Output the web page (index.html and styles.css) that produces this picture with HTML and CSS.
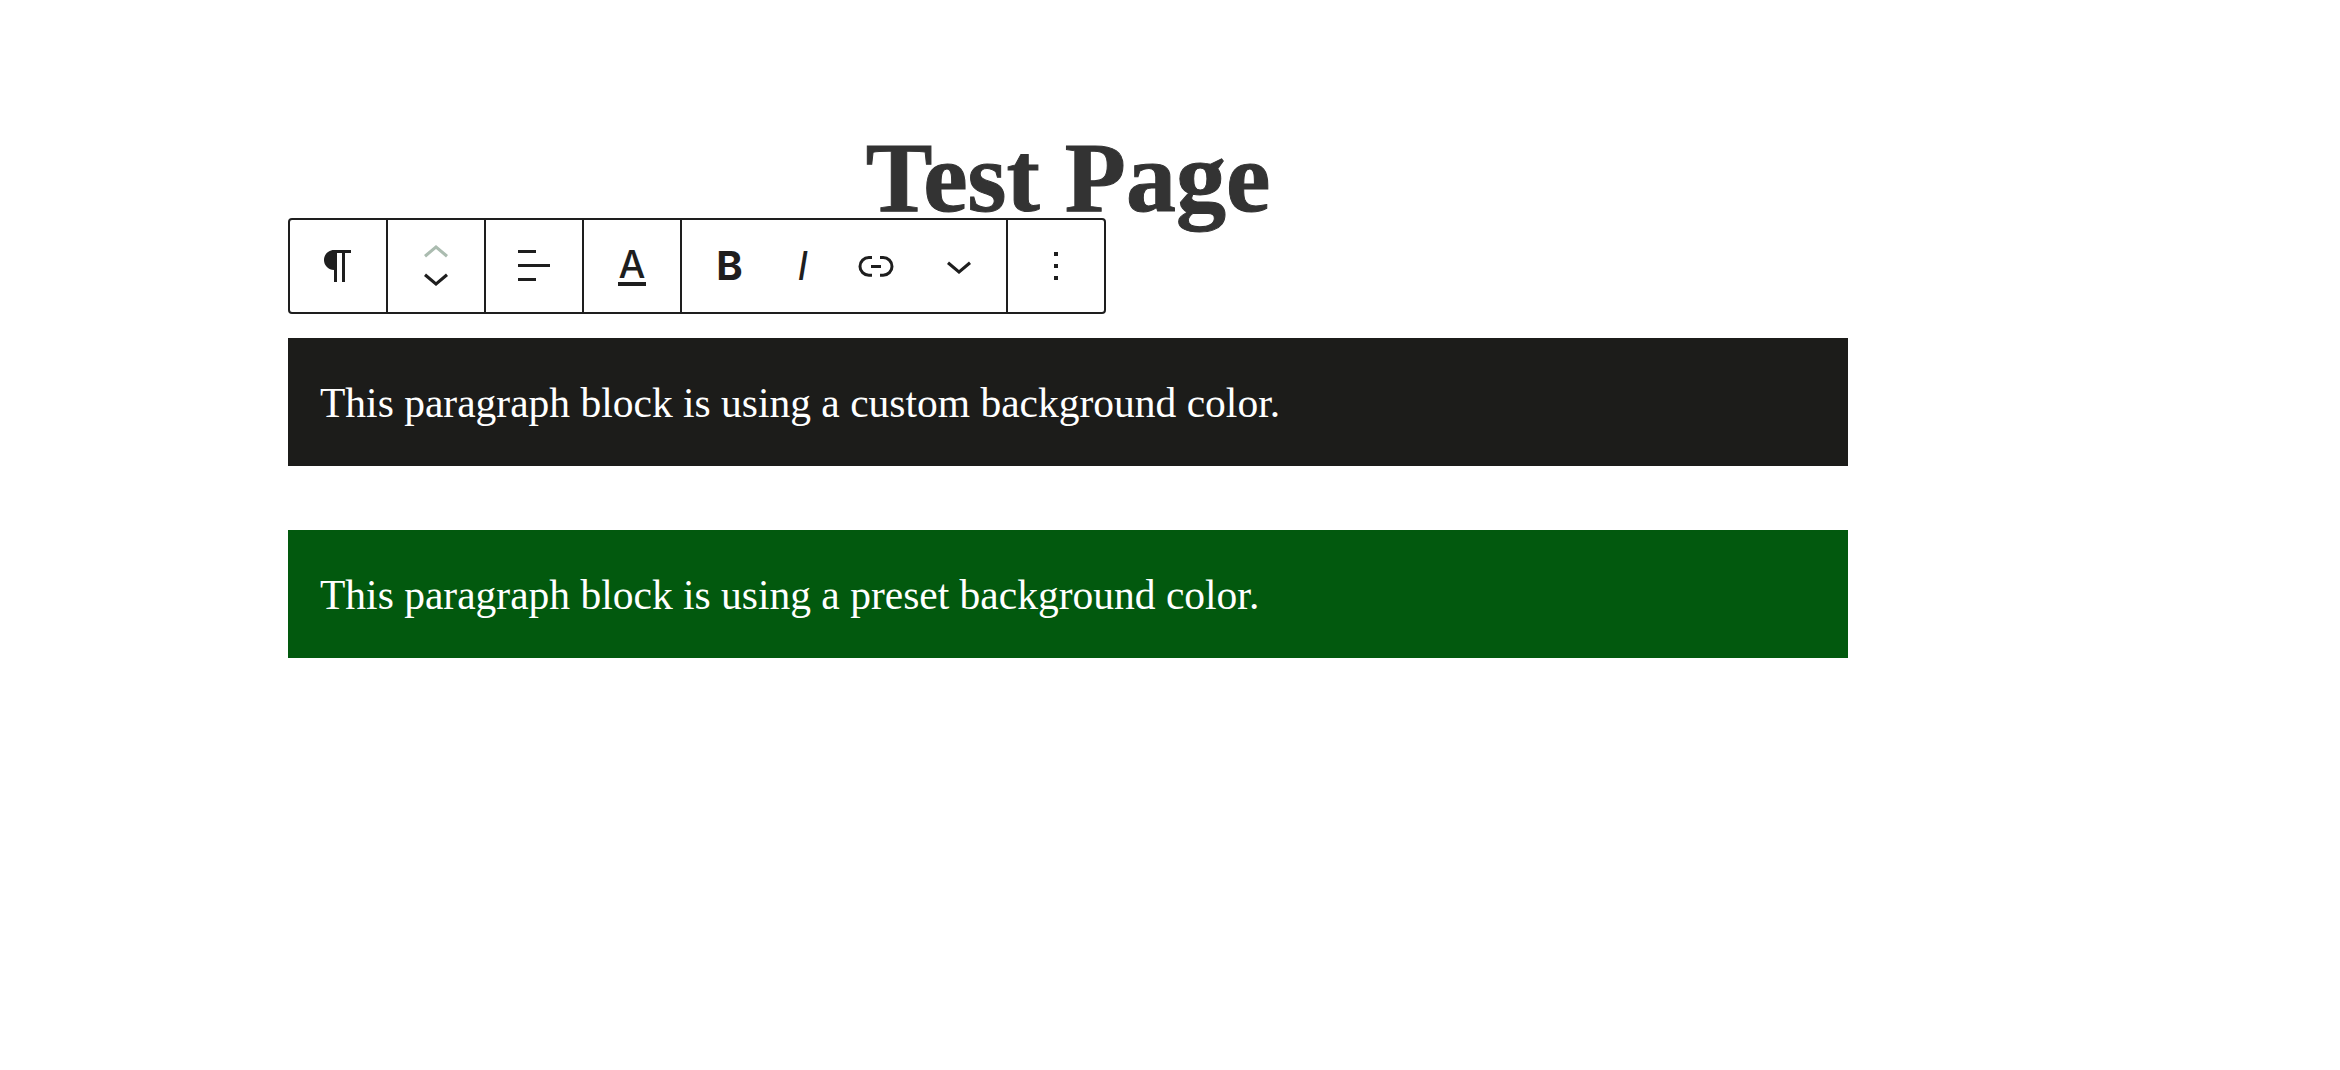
FILE: index.html
```html
<!DOCTYPE html>
<html lang="en">
<head>
<meta charset="utf-8">
<title>Test Page</title>
<link rel="stylesheet" href="styles.css">
</head>
<body>
<main class="page">
  <h1 class="title">Test Page</h1>
  <div class="toolbar">
    <div class="cell">
      <svg class="icon" viewBox="0 0 24 24"><path d="m9.99609 14v-.2251l.00391.0001v6.225h1.5v-14.5h2.5v14.5h1.5v-14.5h3v-1.5h-8.50391c-2.76142 0-5 2.23858-5 5 0 2.7614 2.23858 5 5 5z"/></svg>
    </div>
    <div class="cell">
      <svg class="mover" viewBox="0 0 24 32"><path class="disabled" d="M18 10.5 12 5.5 6 10.5 7 11.7l5-4.2 5 4.2z"/><path d="M18 21 12 26 6 21l1-1.2 5 4.2 5-4.2z"/></svg>
    </div>
    <div class="cell">
      <svg class="icon" viewBox="0 0 24 24"><path d="M13 5.5H4V4h9v1.5Zm7 7H4V11h16v1.5Zm-7 7H4V18h9v1.5Z"/></svg>
    </div>
    <div class="cell">
      <span class="color-a">A</span>
    </div>
    <div class="cell format">
      <span class="btn glyph-b">B</span>
      <span class="btn glyph-i">I</span>
      <span class="btn"><svg class="icon" viewBox="0 0 24 24"><path d="M10 17.389H8.444A5.194 5.194 0 1 1 8.444 7H10v1.5H8.444a3.694 3.694 0 0 0 0 7.389H10v1.5ZM14 7h1.556a5.194 5.194 0 0 1 0 10.39H14v-1.5h1.556a3.694 3.694 0 0 0 0-7.39H14V7Zm-4.5 6h5v-1.5h-5V13Z"/></svg></span>
      <span class="btn more"><svg class="icon" viewBox="0 0 24 24"><path d="M18 11 12 16 6 11l1-1.2 5 4.2 5-4.2z"/></svg></span>
    </div>
    <div class="cell">
      <svg class="icon" viewBox="0 0 24 24"><path d="M13 19h-2v-2h2v2zm0-6h-2v-2h2v2zm0-6h-2V5h2v2z"/></svg>
    </div>
  </div>
  <p class="para para-custom">This paragraph block is using a custom background color.</p>
  <p class="para para-preset">This paragraph block is using a preset background color.</p>
</main>
</body>
</html>
```
FILE: styles.css
```css
* { box-sizing: border-box; }
html, body { margin: 0; background: #fff; }
.page { width: 1848px; padding: 120px 0 0 288px; font-family: "Liberation Serif", serif; }
.title {
  margin: 0;
  height: 98px;
  line-height: 116px;
  font-size: 100px;
  font-weight: 700;
  text-align: center;
  color: #333;
  -webkit-text-stroke: 1px #333;
}
.toolbar {
  display: flex;
  width: 818px;
  height: 96px;
  border: 2px solid #1e1e1e;
  border-radius: 4px;
  background: #fff;
  position: relative;
}
.cell {
  flex: 0 0 98px;
  display: flex;
  align-items: center;
  justify-content: center;
  border-right: 2px solid #1e1e1e;
}
.cell:last-child { border-right: 0; flex-basis: 96px; }
.format { flex-basis: 326px; justify-content: flex-start; padding-left: 11px; }
.icon { display: block; width: 48px; height: 48px; fill: #1e1e1e; }
.mover { display: block; width: 48px; height: 64px; fill: #1e1e1e; }
.mover .disabled { fill: #abbcb0; }
.btn {
  flex: 0 0 73px;
  display: flex;
  align-items: center;
  justify-content: center;
  color: #1e1e1e;
  font-family: Inter, sans-serif;
}
.more { flex-basis: 94px; }
.glyph-b { font-size: 40px; font-weight: 700; line-height: 48px; }
.glyph-i { font-size: 40px; font-weight: 400; font-style: italic; line-height: 48px; }
.color-a {
  font-family: Inter, sans-serif;
  font-size: 38px;
  font-weight: 500;
  line-height: 36px;
  width: 28px;
  display: flex;
  justify-content: center;
  color: #1e1e1e;
  border-bottom: 4px solid #1e1e1e;
}
.para {
  margin: 24px 0 0;
  width: 1560px;
  height: 128px;
  padding: 0 32px;
  font-size: 41.5px;
  line-height: 130px;
  color: #fff;
  white-space: nowrap;
}
.para-custom { background: #1c1c1a; }
.para-preset { margin-top: 64px; background: #02590e; }
```
